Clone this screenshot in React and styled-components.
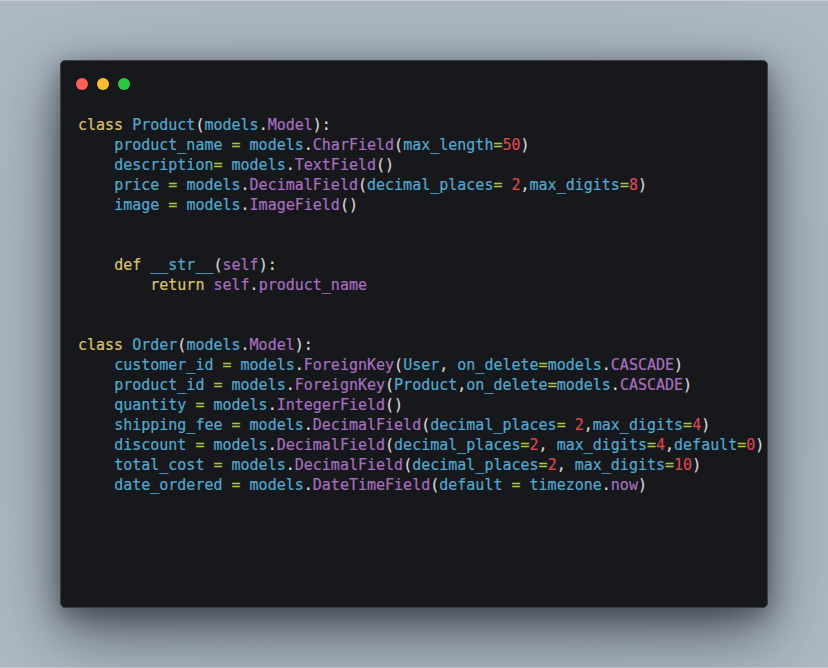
import React from "react";
import styled, { createGlobalStyle } from "styled-components";

const lines = [
  [["k", "class"], ["p", " "], ["n", "Product"], ["p", "("], ["n", "models"], ["p", "."], ["c", "Model"], ["p", "):"]],
  [["p", "    "], ["n", "product_name"], ["p", " "], ["o", "="], ["p", " "], ["n", "models"], ["p", "."], ["c", "CharField"], ["p", "("], ["n", "max_length"], ["o", "="], ["d", "50"], ["p", ")"]],
  [["p", "    "], ["n", "description"], ["o", "="], ["p", " "], ["n", "models"], ["p", "."], ["c", "TextField"], ["p", "()"]],
  [["p", "    "], ["n", "price"], ["p", " "], ["o", "="], ["p", " "], ["n", "models"], ["p", "."], ["c", "DecimalField"], ["p", "("], ["n", "decimal_places"], ["o", "="], ["p", " "], ["d", "2"], ["p", ","], ["n", "max_digits"], ["o", "="], ["d", "8"], ["p", ")"]],
  [["p", "    "], ["n", "image"], ["p", " "], ["o", "="], ["p", " "], ["n", "models"], ["p", "."], ["c", "ImageField"], ["p", "()"]],
  [],
  [],
  [["p", "    "], ["k", "def"], ["p", " "], ["n", "__str__"], ["p", "("], ["c", "self"], ["p", "):"]],
  [["p", "        "], ["k", "return"], ["p", " "], ["c", "self"], ["p", "."], ["c", "product_name"]],
  [],
  [],
  [["k", "class"], ["p", " "], ["n", "Order"], ["p", "("], ["n", "models"], ["p", "."], ["c", "Model"], ["p", "):"]],
  [["p", "    "], ["n", "customer_id"], ["p", " "], ["o", "="], ["p", " "], ["n", "models"], ["p", "."], ["c", "ForeignKey"], ["p", "("], ["n", "User"], ["p", ", "], ["n", "on_delete"], ["o", "="], ["n", "models"], ["p", "."], ["c", "CASCADE"], ["p", ")"]],
  [["p", "    "], ["n", "product_id"], ["p", " "], ["o", "="], ["p", " "], ["n", "models"], ["p", "."], ["c", "ForeignKey"], ["p", "("], ["n", "Product"], ["p", ","], ["n", "on_delete"], ["o", "="], ["n", "models"], ["p", "."], ["c", "CASCADE"], ["p", ")"]],
  [["p", "    "], ["n", "quantity"], ["p", " "], ["o", "="], ["p", " "], ["n", "models"], ["p", "."], ["c", "IntegerField"], ["p", "()"]],
  [["p", "    "], ["n", "shipping_fee"], ["p", " "], ["o", "="], ["p", " "], ["n", "models"], ["p", "."], ["c", "DecimalField"], ["p", "("], ["n", "decimal_places"], ["o", "="], ["p", " "], ["d", "2"], ["p", ","], ["n", "max_digits"], ["o", "="], ["d", "4"], ["p", ")"]],
  [["p", "    "], ["n", "discount"], ["p", " "], ["o", "="], ["p", " "], ["n", "models"], ["p", "."], ["c", "DecimalField"], ["p", "("], ["n", "decimal_places"], ["o", "="], ["d", "2"], ["p", ", "], ["n", "max_digits"], ["o", "="], ["d", "4"], ["p", ","], ["n", "default"], ["o", "="], ["d", "0"], ["p", ")"]],
  [["p", "    "], ["n", "total_cost"], ["p", " "], ["o", "="], ["p", " "], ["n", "models"], ["p", "."], ["c", "DecimalField"], ["p", "("], ["n", "decimal_places"], ["o", "="], ["d", "2"], ["p", ", "], ["n", "max_digits"], ["o", "="], ["d", "10"], ["p", ")"]],
  [["p", "    "], ["n", "date_ordered"], ["p", " "], ["o", "="], ["p", " "], ["n", "models"], ["p", "."], ["c", "DateTimeField"], ["p", "("], ["n", "default"], ["p", " "], ["o", "="], ["p", " "], ["n", "timezone"], ["p", "."], ["c", "now"], ["p", ")"]],
];

// token colours: keyword, name, punctuation, operator, class/attr, digit
const colors = {
  k: "#dcc26b",
  n: "#52a9d2",
  p: "#d6d8da",
  o: "#aac443",
  c: "#a86fc0",
  d: "#d9474f",
};

const GlobalStyle = createGlobalStyle`
  html, body {
    margin: 0;
    padding: 0;
  }
  body {
    background: #a8b3be;
  }
`;

const Page = styled.div`
  width: 828px;
  height: 668px;
  display: flex;
  align-items: center;
  justify-content: center;
  background: radial-gradient(ellipse at center, #a3aeb9 0%, #a9b4bf 70%, #adb8c3 100%);
  border-top: 1px solid #c2cad2;
  border-bottom: 1px solid #c2cad2;
  box-sizing: border-box;
`;

const Window = styled.div`
  width: 708px;
  height: 548px;
  box-sizing: border-box;
  background: #17181b;
  border: 1px solid #3c4046;
  border-radius: 5px;
  box-shadow: 0 24px 60px rgba(20, 26, 34, 0.6), 0 6px 24px rgba(20, 26, 34, 0.4);
  padding: 17px 0 0 15px;
  display: flex;
  flex-direction: column;
`;

const TitleBar = styled.div`
  display: flex;
  gap: 9px;
  height: 12px;
`;

const Dot = styled.span`
  width: 12px;
  height: 12px;
  border-radius: 50%;
  background: ${(props) => props.color};
`;

const Code = styled.pre`
  margin: 25px 0 0 2px;
  font-family: "DejaVu Sans Mono", "Liberation Mono", monospace;
  font-size: 15px;
  line-height: 20px;
  white-space: pre;
  color: #d6d8da;
  -webkit-text-stroke: 0.2px currentColor;
`;

const Line = styled.div`
  height: 20px;
`;

const Tok = styled.span`
  color: ${(props) => colors[props.$t]};
`;

function App() {
  return (
    <>
      <GlobalStyle />
      <Page>
        <Window>
          <TitleBar>
            <Dot color="#fe5f57" />
            <Dot color="#febc2e" />
            <Dot color="#28c840" />
          </TitleBar>
          <Code>
            {lines.map((line, i) => (
              <Line key={i}>
                {line.map(([t, text], j) => (
                  <Tok key={j} $t={t}>
                    {text}
                  </Tok>
                ))}
              </Line>
            ))}
          </Code>
        </Window>
      </Page>
    </>
  );
}

export default App;
